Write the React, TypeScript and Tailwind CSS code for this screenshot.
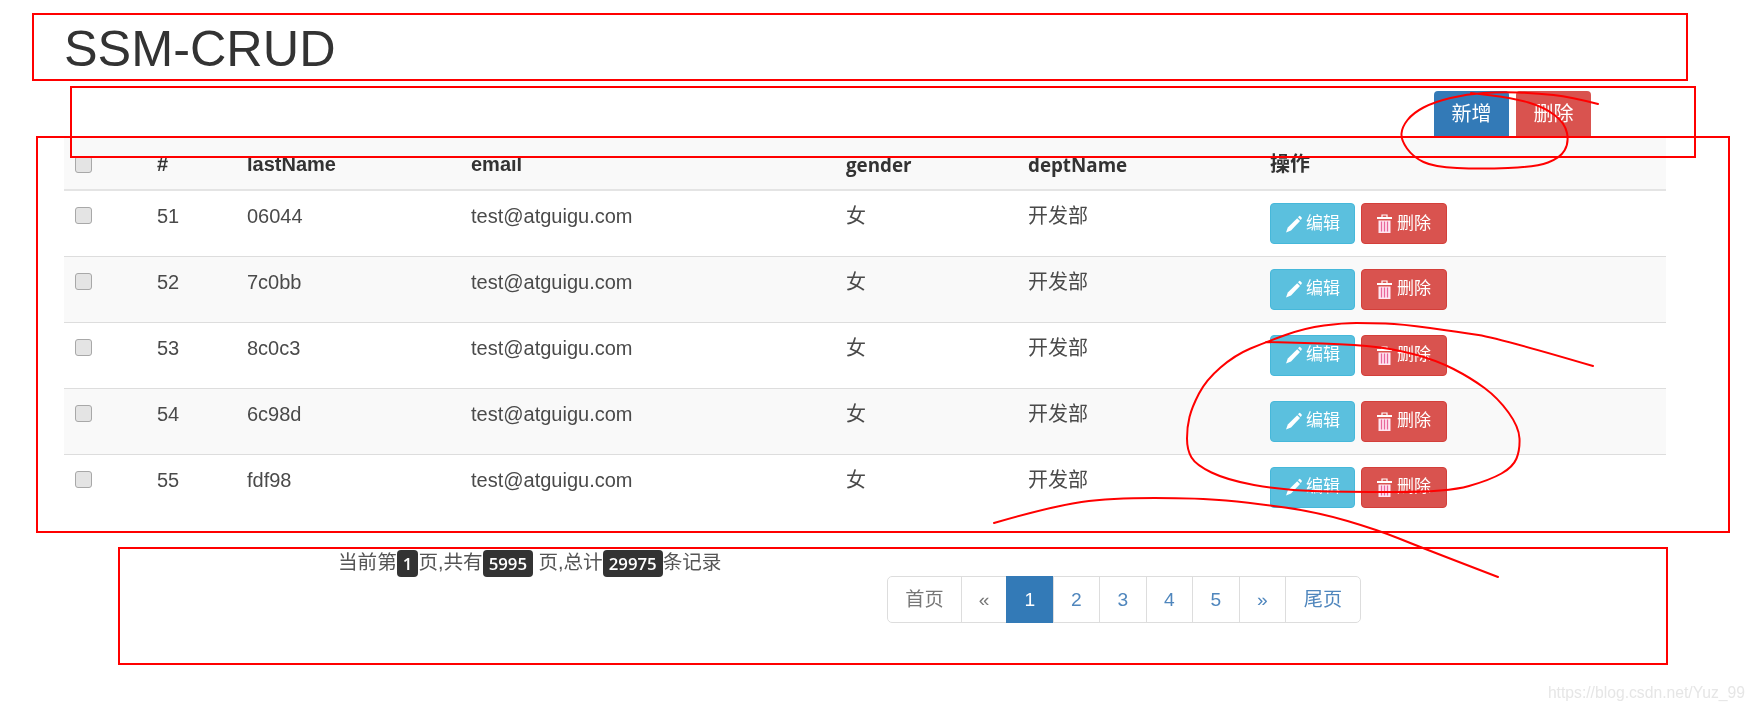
const employees = [
  { id: 51, lastName: "06044" },
  { id: 52, lastName: "7c0bb" },
  { id: 53, lastName: "8c0c3" },
  { id: 54, lastName: "6c98d" },
  { id: 55, lastName: "fdf98" },
];

const pages = ["1", "2", "3", "4", "5"];

// freehand pen strokes drawn on top of the screenshot
const strokes: number[][][] = [
  [[1598, 104], [1571, 97], [1536, 93], [1500, 92], [1467, 94], [1434, 102], [1413, 113], [1402, 127], [1401, 140], [1413, 157], [1434, 167], [1480, 169], [1536, 167], [1560, 158], [1569, 143], [1565, 123], [1544, 107], [1513, 98], [1471, 93]],
  [[1593, 366], [1498, 338], [1459, 332], [1401, 324], [1370, 323], [1343, 323], [1305, 328], [1266, 342], [1235, 355], [1206, 380], [1192, 407], [1187, 427], [1187, 450], [1196, 465], [1227, 480], [1281, 490], [1343, 492], [1448, 492], [1490, 480], [1513, 467], [1520, 450], [1519, 427], [1498, 398], [1471, 378], [1436, 360], [1390, 348], [1343, 344], [1266, 342]],
  [[994, 523], [1053, 506], [1110, 498], [1199, 498], [1253, 503], [1317, 512], [1378, 530], [1420, 547], [1498, 577]],
];

const smoothPath = (pts: number[][]) => {
  let d = `M${pts[0][0]} ${pts[0][1]}`;
  for (let i = 1; i < pts.length - 1; i++) {
    const mx = (pts[i][0] + pts[i + 1][0]) / 2;
    const my = (pts[i][1] + pts[i + 1][1]) / 2;
    d += ` Q${pts[i][0]} ${pts[i][1]} ${mx} ${my}`;
  }
  const last = pts[pts.length - 1];
  return `${d} L${last[0]} ${last[1]}`;
};

function PencilIcon() {
  return (
    <svg viewBox="0 0 17 18" className="h-[18px] w-[17px]" fill="#fff">
      <path d="M12.2 3.2 15 6 6 15.6 1 17.4 2.8 12.4Z" />
      <path d="M13 2.3 14 1.2a1 1 0 0 1 1.4 0l1.2 1.2a1 1 0 0 1 0 1.4L15.8 5Z" />
    </svg>
  );
}

function TrashIcon() {
  return (
    <svg viewBox="0 0 15 19" className="h-[19px] w-[15px]" fill="none">
      <path d="M5 3V1h5v2" stroke="#fff" strokeWidth="1.2" />
      <path d="M0 4h15" stroke="#fff" strokeWidth="2" />
      <path d="M1.5 6.5h12V19h-12z" fill="#ffe6f2" />
      <path d="M4.5 7.5v10M7.5 7.5v10M10.5 7.5v10" stroke="#e8669a" strokeWidth="1.3" />
    </svg>
  );
}

function Checkbox() {
  return (
    <input
      type="checkbox"
      className="block h-[17px] w-[17px] appearance-none rounded-[3px] border border-[#a8a8a8] bg-[#e4e4e4]"
    />
  );
}

export default function App() {
  return (
    <div className="relative h-[711px] w-[1756px] overflow-hidden bg-white font-['Liberation_Sans','Noto_Sans_CJK_SC',sans-serif] text-[20px] text-[#333]">
      <div className="pt-[21px] blur-[0.5px]">
        <h1 className="pl-[64px] text-[50.4px] leading-[56px]">SSM-CRUD</h1>

        <div className="mt-[14px] flex justify-end gap-[7px] pr-[165px] text-white">
          <button className="h-[46px] w-[75px] rounded-t-[4px] bg-[#337ab7]">新增</button>
          <button className="h-[46px] w-[75px] rounded-t-[4px] bg-[#d9534f]">删除</button>
        </div>

        <table className="ml-[64px] w-[1602px] table-fixed text-left">
          <colgroup>
            <col className="w-[82px]" />
            <col className="w-[90px]" />
            <col className="w-[224px]" />
            <col className="w-[375px]" />
            <col className="w-[182px]" />
            <col className="w-[242px]" />
            <col />
          </colgroup>
          <thead>
            <tr className="h-[53px] border-b-2 border-[#e4e4e4] bg-[#f9f9f9] align-bottom font-bold">
              <th className="px-[11px] pb-[16px]">
                <Checkbox />
              </th>
              <th className="px-[11px] pb-[10px]">#</th>
              <th className="px-[11px] pb-[10px]">lastName</th>
              <th className="px-[11px] pb-[10px]">email</th>
              <th className="px-[11px] pb-[10px] font-['Open_Sans',sans-serif] text-[18.8px]">gender</th>
              <th className="px-[11px] pb-[10px] font-['Open_Sans',sans-serif] text-[18.8px]">deptName</th>
              <th className="px-[11px] pb-[10px]">操作</th>
            </tr>
          </thead>
          <tbody>
            {employees.map((emp, i) => (
              <tr
                key={emp.id}
                className={`h-[66px] align-top text-[#4a4a4a] ${i > 0 ? "border-t border-[#ddd]" : ""} ${i % 2 === 1 ? "bg-[#f9f9f9]" : "bg-white"}`}
              >
                <td className="px-[11px] pt-[16px]">
                  <Checkbox />
                </td>
                <td className="px-[11px] pt-[10px]">{emp.id}</td>
                <td className="px-[11px] pt-[10px]">{emp.lastName}</td>
                <td className="px-[11px] pt-[10px]">test@atguigu.com</td>
                <td className="px-[11px] pt-[10px]">女</td>
                <td className="px-[11px] pt-[10px]">开发部</td>
                <td className="px-[11px] pt-[12px]">
                  <div className="flex gap-[6px] text-[17px] text-white">
                    <button className="flex h-[41px] w-[85px] items-center justify-center gap-[4px] rounded-[4px] border border-[#46b8da] bg-[#5bc0de]">
                      <PencilIcon />
                      编辑
                    </button>
                    <button className="flex h-[41px] w-[86px] items-center justify-center gap-[5px] rounded-[4px] border border-[#d43f3a] bg-[#d9534f]">
                      <TrashIcon />
                      删除
                    </button>
                  </div>
                </td>
              </tr>
            ))}
          </tbody>
        </table>

        <div className="mt-[29px] flex">
          <div className="ml-[338px] flex h-[28px] w-[549px] items-center whitespace-pre text-[19.6px] text-[#555]">
            <span>当前第</span>
            <span className="rounded-[4px] bg-[#333] px-[6px] text-[16.8px] leading-[27px] font-semibold font-['Open_Sans',sans-serif] text-white">1</span>
            <span>页,共有</span>
            <span className="rounded-[4px] bg-[#333] px-[6px] text-[16.8px] leading-[27px] font-semibold font-['Open_Sans',sans-serif] text-white">5995</span>
            <span> 页,总计</span>
            <span className="rounded-[4px] bg-[#333] px-[6px] text-[16.8px] leading-[27px] font-semibold font-['Open_Sans',sans-serif] text-white">29975</span>
            <span>条记录</span>
          </div>
          <ul className="mt-[27px] flex h-[47px] items-stretch text-[19.2px] text-[#4f86bd]">
            <li className="flex w-[75px] items-center justify-center rounded-l-[5px] border border-[#ddd] pt-px text-[#777]">首页</li>
            <li className="-ml-px flex w-[46px] items-center justify-center border border-[#ddd] pt-px text-[#777]">«</li>
            {pages.map((p) => (
              <li
                key={p}
                className={
                  p === "1"
                    ? "-ml-px flex w-[47.5px] items-center justify-center border border-[#337ab7] bg-[#337ab7] pt-px text-white"
                    : "-ml-px flex w-[47.5px] items-center justify-center border border-[#ddd] pt-px"
                }
              >
                {p}
              </li>
            ))}
            <li className="-ml-px flex w-[47.5px] items-center justify-center border border-[#ddd] pt-px">»</li>
            <li className="-ml-px flex w-[76px] items-center justify-center rounded-r-[5px] border border-[#ddd] pt-px">尾页</li>
          </ul>
        </div>
      </div>

      <div className="absolute top-[681px] right-[11px] text-[15.7px] text-[#e6e6e6] blur-[0.5px]">https://blog.csdn.net/Yuz_99</div>

      {/* red annotation boxes and pen strokes */}
      <svg className="pointer-events-none absolute inset-0" width="1756" height="711" fill="none" stroke="#ff0000" strokeWidth="2">
        <rect x="33" y="14" width="1654" height="66" />
        <rect x="71" y="87" width="1624" height="70" />
        <rect x="37" y="137" width="1692" height="395" />
        <rect x="119" y="548" width="1548" height="116" />
        {strokes.map((pts) => (
          <path key={pts[0].join()} d={smoothPath(pts)} strokeLinejoin="round" strokeLinecap="round" />
        ))}
      </svg>
    </div>
  );
}
